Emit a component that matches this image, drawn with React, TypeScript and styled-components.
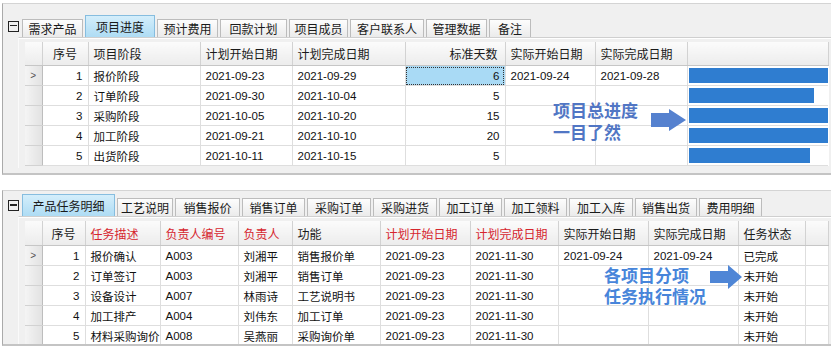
import React from "react";
import styled, { createGlobalStyle } from "styled-components";

const GlobalStyle = createGlobalStyle`
  html, body {
    margin: 0;
    padding: 0;
    background: #ffffff;
  }
  body {
    font-family: "Liberation Sans", "Noto Sans CJK SC", sans-serif;
    font-size: 12px;
    color: #111;
  }
`;

const Page = styled.div`
  width: 831px;
  height: 346px;
  overflow: hidden;
  padding-left: 2px;
  box-sizing: border-box;
`;

const Panel = styled.section<{ $h: number; $mt: number; $pt: number }>`
  position: relative;
  box-sizing: border-box;
  height: ${(p) => p.$h}px;
  margin-top: ${(p) => p.$mt}px;
  padding: ${(p) => p.$pt}px 0 0 5px;
  background: #f0f0f0;
  border-left: 1px solid #aaaaaa;
  border-top: 1px solid #d4d4d4;
  border-bottom: 2px solid #c4c4c4;
  overflow: hidden;
`;

const TabBar = styled.div<{ $h: number }>`
  display: flex;
  align-items: flex-end;
  gap: 2px;
  height: ${(p) => p.$h}px;
`;

const Expander = styled.div`
  position: relative;
  align-self: center;
  box-sizing: border-box;
  width: 11px;
  height: 11px;
  margin-right: 1px;
  border: 1.5px solid #222;
  &::after {
    content: "";
    position: absolute;
    left: 1px;
    right: 1px;
    top: 3.2px;
    height: 1.5px;
    background: #222;
  }
`;

const Tab = styled.div<{ $w: number; $active?: boolean }>`
  box-sizing: border-box;
  width: ${(p) => p.$w}px;
  height: ${(p) => (p.$active ? 22 : 18)}px;
  display: flex;
  align-items: center;
  justify-content: center;
  border: 1px solid ${(p) => (p.$active ? "#86bddf" : "#bcbcbc")};
  border-bottom: none;
  background: ${(p) =>
    p.$active
      ? "linear-gradient(#d4eefb, #aedcf4)"
      : "linear-gradient(#fdfdfd, #ebebeb)"};
  font-size: 12px;
  color: #1a1a1a;
  white-space: nowrap;
`;

const GridFrame = styled.div<{ $h: number; $pt: number }>`
  box-sizing: border-box;
  height: ${(p) => p.$h}px;
  margin-left: 10px;
  padding: ${(p) => p.$pt}px 0 0 6px;
  border-top: 1px solid #cfcfcf;
  border-left: 1px solid #fafafa;
  box-shadow: inset 0 1px 0 #ffffff;
  overflow: hidden;
`;

const Table = styled.table`
  width: 803px;
  table-layout: fixed;
  border-collapse: collapse;
  background: #ffffff;
`;

const Th = styled.th<{ $h: number; $align: string; $red?: boolean }>`
  height: ${(p) => p.$h}px;
  padding: 0 ${(p) => (p.$align === "right" ? 7 : 5)}px 0 5px;
  text-align: ${(p) => p.$align};
  font-weight: normal;
  font-size: 12px;
  color: ${(p) => (p.$red ? "#d6262e" : "#1a1a1a")};
  background: linear-gradient(#fbfbfb, #ececec);
  border-right: 1px solid #d2d2d2;
  border-bottom: 1px solid #c6c6c6;
  white-space: nowrap;
  overflow: hidden;
`;

const Indicator = styled.td`
  height: 19px;
  padding: 0;
  text-align: center;
  font-size: 10px;
  color: #555;
  background: linear-gradient(90deg, #f4f4f4, #e2e2e2);
  border-right: 1px solid #bdbdbd;
  border-bottom: 1px solid #d2d2d2;
`;

const Td = styled.td<{ $align: string; $selected?: boolean }>`
  height: 19px;
  padding: 0 5px;
  text-align: ${(p) => p.$align};
  font-size: 11.5px;
  color: #111;
  white-space: nowrap;
  overflow: hidden;
  background: ${(p) => (p.$selected ? "#a9daf5" : "#ffffff")};
  outline: ${(p) => (p.$selected ? "1px dotted #333" : "none")};
  outline-offset: -2px;
  border-right: 1px solid #dedede;
  border-bottom: 1px solid #dedede;
`;

const BarCell = styled.td`
  height: 19px;
  padding: 0 0 0 1px;
  border-bottom: 1px solid #dedede;
  vertical-align: middle;
`;

const Bar = styled.div`
  height: 15px;
  background: #2f7dd0;
`;

const Note = styled.div<{ $left: number; $top: number; $color: string; $lh: number; $gap: number }>`
  position: absolute;
  left: ${(p) => p.$left}px;
  top: ${(p) => p.$top}px;
  display: flex;
  align-items: flex-start;
  gap: ${(p) => p.$gap}px;
  font-family: "Noto Sans CJK SC", sans-serif;
  font-size: 17px;
  font-weight: 700;
  line-height: ${(p) => p.$lh}px;
  color: ${(p) => p.$color};
  white-space: nowrap;
`;

const NoteArrow = styled.svg<{ $mt: number }>`
  margin-top: ${(p) => p.$mt}px;
  flex: none;
`;

type Col = { title: string; w: number; align?: "left" | "right" | "center"; red?: boolean };

const topTabs = [
  { t: "需求产品", w: 61 },
  { t: "项目进度", w: 70, active: true },
  { t: "预计费用", w: 61 },
  { t: "回款计划", w: 67 },
  { t: "项目成员", w: 59 },
  { t: "客户联系人", w: 74 },
  { t: "管理数据", w: 61 },
  { t: "备注", w: 42 },
];

const bottomTabs = [
  { t: "产品任务明细", w: 93, active: true },
  { t: "工艺说明", w: 56 },
  { t: "销售报价", w: 65 },
  { t: "销售订单", w: 63 },
  { t: "采购订单", w: 64 },
  { t: "采购进货", w: 64 },
  { t: "加工订单", w: 63 },
  { t: "加工领料", w: 63 },
  { t: "加工入库", w: 64 },
  { t: "销售出货", w: 62 },
  { t: "费用明细", w: 63 },
];

const topCols: Col[] = [
  { title: "序号", w: 46, align: "center" },
  { title: "项目阶段", w: 112 },
  { title: "计划开始日期", w: 92 },
  { title: "计划完成日期", w: 113 },
  { title: "标准天数", w: 100, align: "right" },
  { title: "实际开始日期", w: 90 },
  { title: "实际完成日期", w: 92 },
  { title: "", w: 141 },
];

const stages = [
  { no: 1, name: "报价阶段", ps: "2021-09-23", pe: "2021-09-29", days: 6, as: "2021-09-24", ae: "2021-09-28", pct: 100 },
  { no: 2, name: "订单阶段", ps: "2021-09-30", pe: "2021-10-04", days: 5, as: "", ae: "", pct: 90 },
  { no: 3, name: "采购阶段", ps: "2021-10-05", pe: "2021-10-20", days: 15, as: "", ae: "", pct: 100 },
  { no: 4, name: "加工阶段", ps: "2021-09-21", pe: "2021-10-10", days: 20, as: "", ae: "", pct: 100 },
  { no: 5, name: "出货阶段", ps: "2021-10-11", pe: "2021-10-15", days: 5, as: "", ae: "", pct: 87 },
];

const bottomCols: Col[] = [
  { title: "序号", w: 43, align: "center" },
  { title: "任务描述", w: 75, red: true },
  { title: "负责人编号", w: 78, red: true },
  { title: "负责人", w: 54, red: true },
  { title: "功能", w: 88 },
  { title: "计划开始日期", w: 90, red: true },
  { title: "计划完成日期", w: 88, red: true },
  { title: "实际开始日期", w: 90 },
  { title: "实际完成日期", w: 90 },
  { title: "任务状态", w: 67 },
  { title: "", w: 23 },
];

const tasks = [
  ["1", "报价确认", "A003", "刘湘平", "销售报价单", "2021-09-23", "2021-11-30", "2021-09-24", "2021-09-24", "已完成", ""],
  ["2", "订单签订", "A003", "刘湘平", "销售订单", "2021-09-23", "2021-11-30", "", "", "未开始", ""],
  ["3", "设备设计", "A007", "林雨诗", "工艺说明书", "2021-09-23", "2021-11-30", "", "", "未开始", ""],
  ["4", "加工排产", "A004", "刘伟东", "加工订单", "2021-09-23", "2021-11-30", "", "", "未开始", ""],
  ["5", "材料采购询价", "A008", "吴燕丽", "采购询价单", "2021-09-23", "2021-11-30", "", "", "未开始", ""],
];

const GridHead = ({ cols, h }: { cols: Col[]; h: number }) => (
  <>
    <colgroup>
      <col style={{ width: 17 }} />
      {cols.map((c, i) => (
        <col key={i} style={{ width: c.w }} />
      ))}
    </colgroup>
    <thead>
      <tr>
        <Th $h={h} $align="left" />
        {cols.map((c, i) => (
          <Th key={i} $h={h} $align={c.align || "left"} $red={c.red}>
            {c.title}
          </Th>
        ))}
      </tr>
    </thead>
  </>
);

const Arrow = ({ w, h, shaft, neck, color, mt }: { w: number; h: number; shaft: number; neck: number; color: string; mt: number }) => {
  const t = (h - shaft) / 2;
  return (
    <NoteArrow $mt={mt} width={w} height={h} viewBox={`0 0 ${w} ${h}`}>
      <polygon
        points={`0,${t} ${neck},${t} ${neck},0 ${w},${h / 2} ${neck},${h} ${neck},${h - t} 0,${h - t}`}
        fill={color}
      />
    </NoteArrow>
  );
};

export default function App() {
  return (
    <Page>
      <GlobalStyle />
      <Panel $h={172} $mt={3} $pt={11}>
        <TabBar $h={22}>
          <Expander />
          {topTabs.map((t) => (
            <Tab key={t.t} $w={t.w} $active={t.active}>
              {t.t}
            </Tab>
          ))}
        </TabBar>
        <GridFrame $h={131} $pt={4}>
          <Table>
            <GridHead cols={topCols} h={23} />
            <tbody>
              {stages.map((s, i) => (
                <tr key={s.no}>
                  <Indicator>{i === 0 ? ">" : ""}</Indicator>
                  <Td $align="right">{s.no}</Td>
                  <Td $align="left">{s.name}</Td>
                  <Td $align="left">{s.ps}</Td>
                  <Td $align="left">{s.pe}</Td>
                  <Td $align="right" $selected={i === 0}>
                    {s.days}
                  </Td>
                  <Td $align="left">{s.as}</Td>
                  <Td $align="left">{s.ae}</Td>
                  <BarCell>
                    <Bar style={{ width: `${s.pct}%` }} />
                  </BarCell>
                </tr>
              ))}
            </tbody>
          </Table>
        </GridFrame>
        <Note $left={550} $top={95} $color="#5176c4" $lh={22} $gap={13}>
          <div>
            项目总进度
            <br />
            一目了然
          </div>
          <Arrow w={35} h={22} shaft={14} neck={18} color="#5581cf" mt={10} />
        </Note>
      </Panel>

      <Panel $h={156} $mt={15} $pt={4}>
        <TabBar $h={21}>
          <Expander />
          {bottomTabs.map((t) => (
            <Tab key={t.t} $w={t.w} $active={t.active}>
              {t.t}
            </Tab>
          ))}
        </TabBar>
        <GridFrame $h={131} $pt={4}>
          <Table>
            <GridHead cols={bottomCols} h={24} />
            <tbody>
              {tasks.map((r, i) => (
                <tr key={r[0]}>
                  <Indicator>{i === 0 ? ">" : ""}</Indicator>
                  {r.map((v, j) => (
                    <Td key={j} $align={j === 0 ? "right" : "left"}>
                      {v}
                    </Td>
                  ))}
                </tr>
              ))}
            </tbody>
          </Table>
        </GridFrame>
        <Note $left={601} $top={73} $color="#4785da" $lh={21} $gap={4}>
          <div>
            各项目分项
            <br />
            任务执行情况
          </div>
          <Arrow w={32} h={24} shaft={12} neck={18} color="#4f86d6" mt={1} />
        </Note>
      </Panel>
    </Page>
  );
}
